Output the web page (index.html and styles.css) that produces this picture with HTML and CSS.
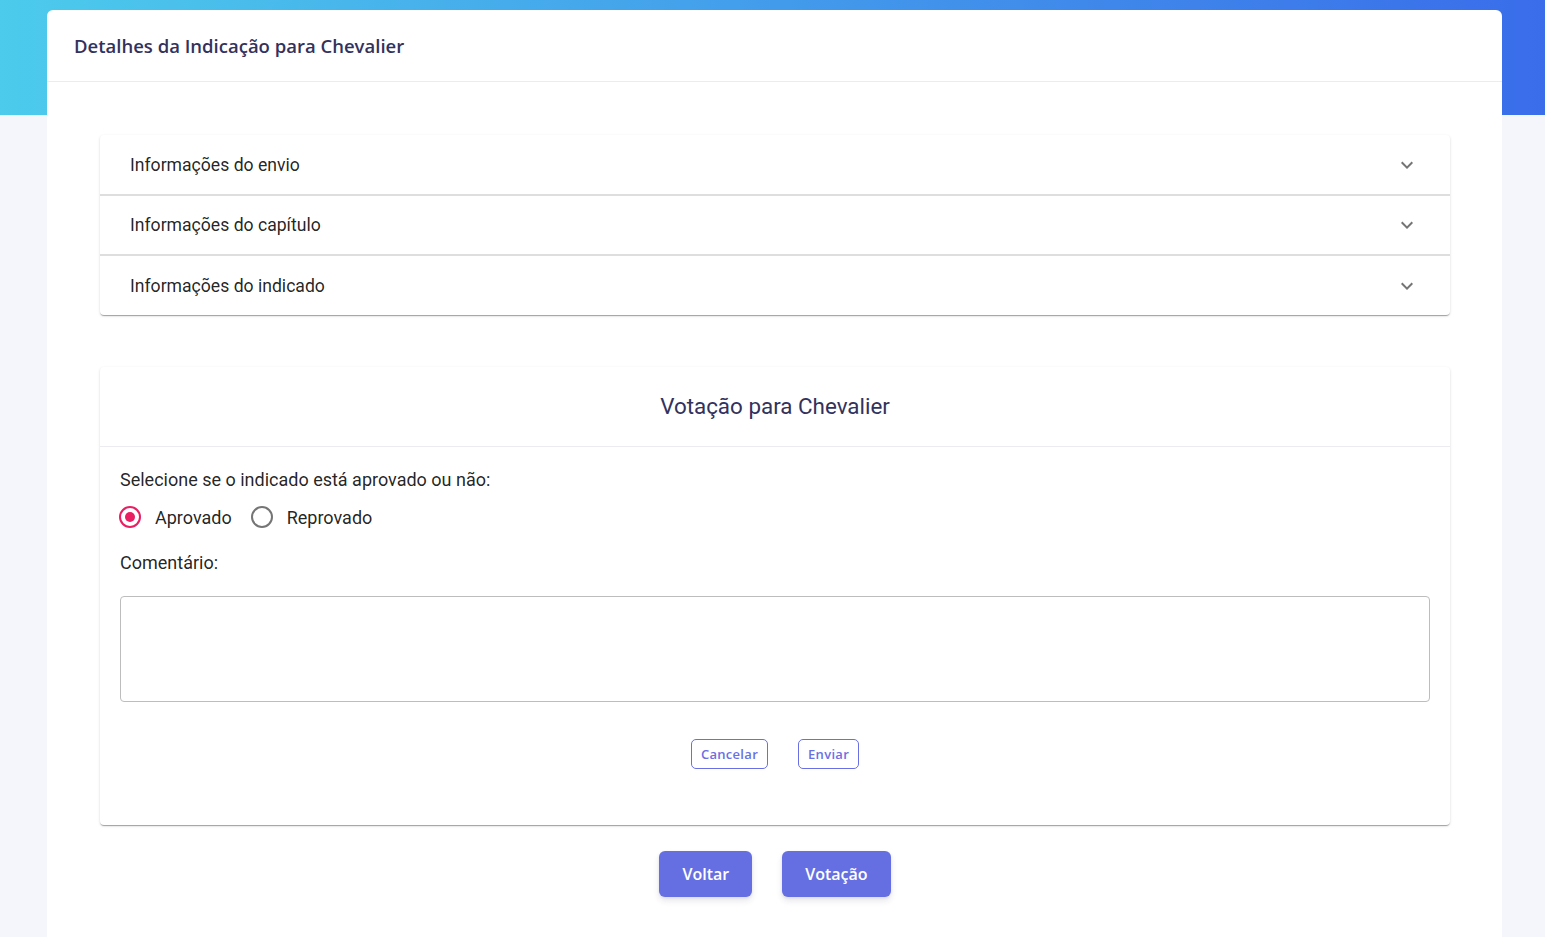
FILE: index.html
```html
<!DOCTYPE html>
<html lang="pt">
<head>
<meta charset="utf-8">
<title>Detalhes da Indicação</title>
<link rel="stylesheet" href="styles.css">
</head>
<body>
<div class="hero"></div>
<main class="page">
  <section class="card">
    <header class="card-header">
      <h3 class="card-title">Detalhes da Indicação para Chevalier</h3>
    </header>
    <div class="card-body">
      <div class="accordion">
        <div class="panel">
          <span class="panel-title">Informações do envio</span>
          <svg class="chev" width="12" height="8" viewBox="0 0 12 8"><path d="M1.4 0.6 L6 5.2 L10.6 0.6 L12 2 L6 8 L0 2 Z" fill="#757575"/></svg>
        </div>
        <div class="panel">
          <span class="panel-title">Informações do capítulo</span>
          <svg class="chev" width="12" height="8" viewBox="0 0 12 8"><path d="M1.4 0.6 L6 5.2 L10.6 0.6 L12 2 L6 8 L0 2 Z" fill="#757575"/></svg>
        </div>
        <div class="panel">
          <span class="panel-title">Informações do indicado</span>
          <svg class="chev" width="12" height="8" viewBox="0 0 12 8"><path d="M1.4 0.6 L6 5.2 L10.6 0.6 L12 2 L6 8 L0 2 Z" fill="#757575"/></svg>
        </div>
      </div>

      <div class="vote-card">
        <div class="vote-header">Votação para Chevalier</div>
        <div class="vote-body">
          <p class="label">Selecione se o indicado está aprovado ou não:</p>
          <div class="radios">
            <label class="radio"><span class="ring checked"><span class="dot"></span></span>Aprovado</label>
            <label class="radio"><span class="ring"></span>Reprovado</label>
          </div>
          <p class="label comment">Comentário:</p>
          <textarea class="textarea"></textarea>
          <div class="small-actions">
            <button class="btn-outline">Cancelar</button>
            <button class="btn-outline">Enviar</button>
          </div>
        </div>
      </div>

      <div class="actions">
        <button class="btn-primary">Voltar</button>
        <button class="btn-primary">Votação</button>
      </div>
    </div>
  </section>
</main>
</body>
</html>
```

FILE: styles.css
```css
* { box-sizing: border-box; }
html, body { margin: 0; padding: 0; }
body {
  background: #f5f6fb;
  font-family: Roboto, "Liberation Sans", sans-serif;
  height: 937px;
  overflow: hidden;
  position: relative;
}
.hero {
  height: 115px;
  background: linear-gradient(90deg, #4ccbec 0%, #3a6dea 100%);
}
.page {
  margin-top: -105px;
  padding: 0 43px 0 47px;
}
.card {
  background: #fff;
  border-radius: 6px;
  min-height: 940px;
}
.card-header {
  height: 72px;
  border-bottom: 1px solid #ececf0;
  display: flex;
  align-items: center;
  padding: 0 27px;
}
.card-title {
  margin: 0;
  font-family: "Open Sans", sans-serif;
  font-weight: 600;
  font-size: 18.5px;
  color: #32325d;
}
.card-body {
  padding: 53px 52px 0 53px;
}
.accordion {
  border-radius: 4px;
  box-shadow: 0 2px 1px -1px rgba(0,0,0,.2), 0 1px 1px 0 rgba(0,0,0,.14), 0 1px 3px 0 rgba(0,0,0,.12);
  background: #fff;
}
.panel {
  height: 60px;
  display: flex;
  align-items: center;
  justify-content: space-between;
  padding: 0 37px 0 30px;
  border-top: 2px solid #dedede;
}
.panel:first-child { border-top: none; height: 59px; }
.panel:last-child { height: 61px; }
.panel-title {
  font-size: 17.6px;
  color: rgba(0,0,0,.87);
}
.chev { display: block; }

.vote-card {
  margin-top: 52px;
  background: #fff;
  border-radius: 4px;
  box-shadow: 0 2px 1px -1px rgba(0,0,0,.2), 0 1px 1px 0 rgba(0,0,0,.14), 0 1px 3px 0 rgba(0,0,0,.12);
}
.vote-header {
  height: 80px;
  border-bottom: 1px solid #ececf0;
  display: flex;
  align-items: center;
  justify-content: center;
  font-size: 22.4px;
  color: #32325d;
  padding-bottom: 1px;
}
.vote-body {
  padding: 21px 20px 56px 20px;
}
.label {
  margin: 0;
  font-size: 18px;
  line-height: 24px;
  color: rgba(0,0,0,.87);
}
.radios {
  display: flex;
  align-items: center;
  gap: 20px;
  margin-top: 13px;
  height: 24px;
}
.radio {
  display: flex;
  align-items: center;
  gap: 14px;
  font-size: 18px;
  color: rgba(0,0,0,.87);
}
.ring {
  width: 22px;
  height: 22px;
  margin-left: -1px;
  border-radius: 50%;
  border: 2px solid #757575;
  display: flex;
  align-items: center;
  justify-content: center;
}
.ring.checked { border-color: #e91e63; }
.dot {
  width: 10px;
  height: 10px;
  border-radius: 50%;
  background: #e91e63;
}
.comment { margin-top: 22px; }
.textarea {
  display: block;
  width: 100%;
  height: 106px;
  margin-top: 21px;
  border: 1px solid #bdbdbd;
  border-radius: 4px;
  resize: none;
  outline: none;
}
.small-actions {
  display: flex;
  justify-content: center;
  gap: 30px;
  margin-top: 37px;
}
.btn-outline {
  height: 30px;
  padding: 0 9px;
  background: #fff;
  border: 1px solid #6a70e4;
  border-radius: 5px;
  color: #6a70e4;
  font-family: "Open Sans", sans-serif;
  font-weight: 600;
  font-size: 13px;
  letter-spacing: 0.3px;
}
.actions {
  display: flex;
  justify-content: center;
  gap: 30px;
  margin-top: 26px;
}
.btn-primary {
  height: 46px;
  padding: 0 23px;
  background: #666fe2;
  border: none;
  border-radius: 6px;
  color: #fff;
  font-family: "Open Sans", sans-serif;
  font-weight: 600;
  font-size: 16px;
  letter-spacing: 0;
  box-shadow: 0 4px 6px rgba(50,50,93,.11), 0 1px 3px rgba(0,0,0,.08);
}
```
